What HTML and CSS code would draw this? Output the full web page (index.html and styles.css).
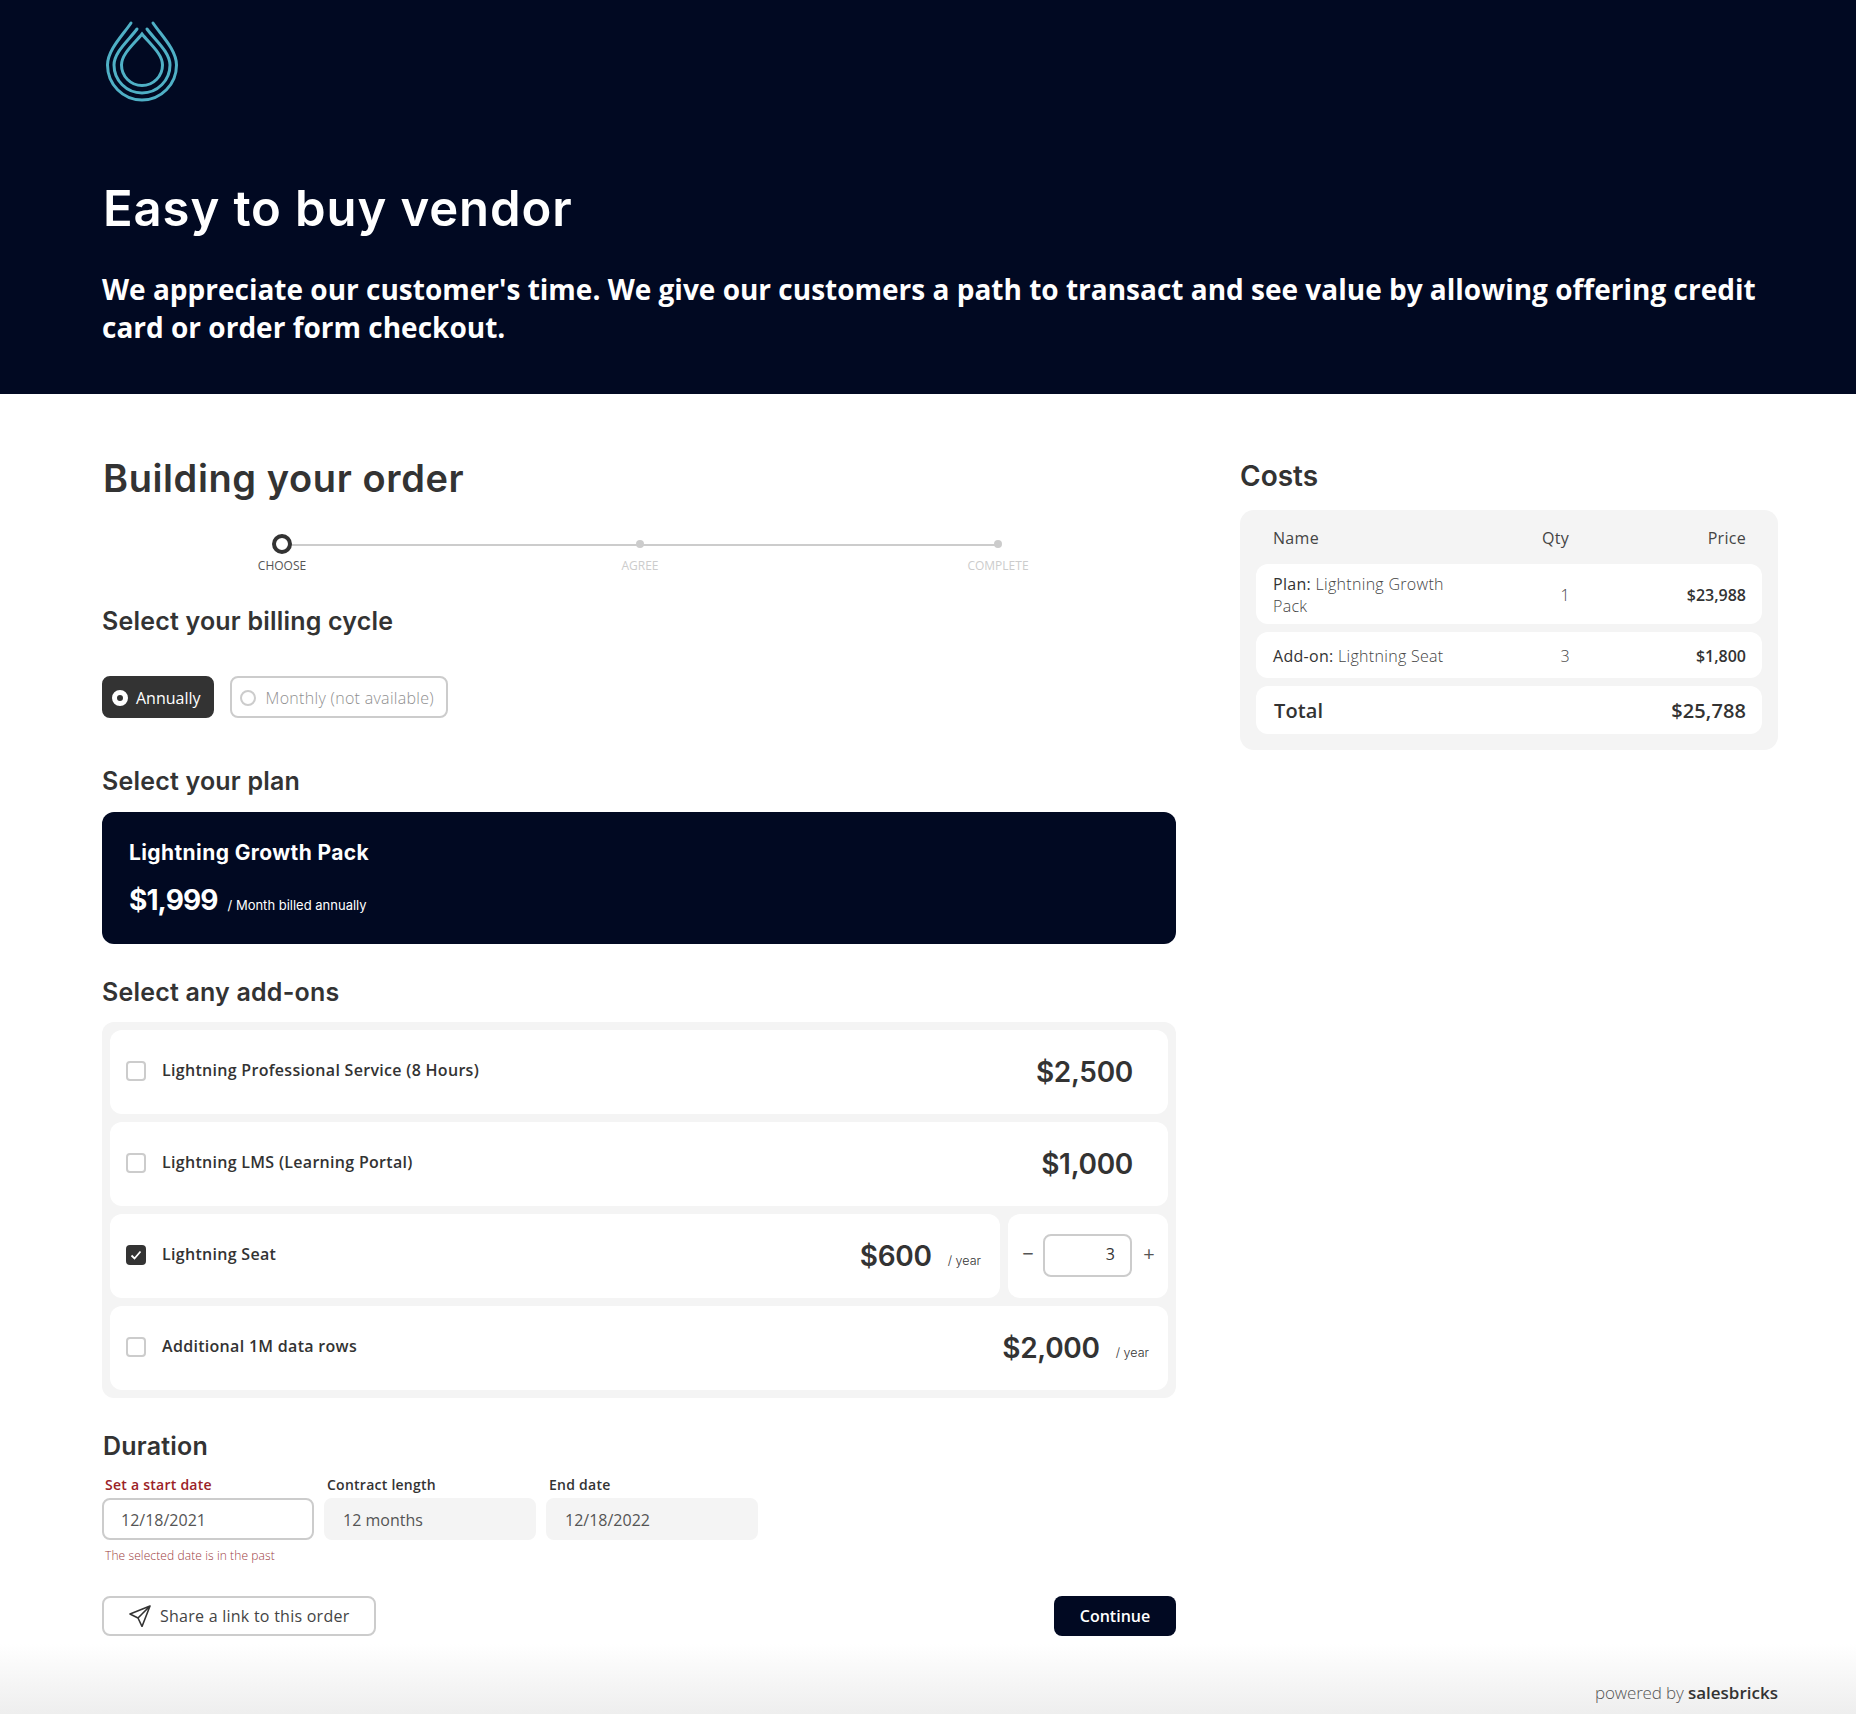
FILE: index.html
```html
<!DOCTYPE html>
<html lang="en">
<head>
  <meta charset="utf-8">
  <title>Easy to buy vendor</title>
  <link rel="stylesheet" href="styles.css">
</head>
<body>
  <header class="hero">
    <svg class="logo" viewBox="0 0 72 82" width="72" height="82" fill="none" stroke="#4fb0c6" stroke-width="3" stroke-linecap="round" aria-hidden="true">
      <path d="M36 14C28 24 15.500 34 15.500 45A20.500 20.500 0 0 0 56.500 45C56.500 34 44 24 36 14Z"/>
      <path d="M31 9C23 20 8 32 8 45A28 28 0 0 0 64 45C64 32 49 20 41 9"/>
      <path d="M25 3C17 15 1.500 30 1.500 45A34.500 35 0 0 0 70.500 45C70.500 30 55 15 47 3"/>
    </svg>
    <h1>Easy to buy vendor</h1>
    <p>We appreciate our customer's time. We give our customers a path to transact and see value by allowing offering credit card or order form checkout.</p>
  </header>

  <main class="page">
    <section class="order">
      <h2 class="order-title">Building your order</h2>

      <div class="stepper">
        <div class="step active"><span class="step-dot"></span><span class="step-label">Choose</span></div>
        <div class="step"><span class="step-dot"></span><span class="step-label">Agree</span></div>
        <div class="step"><span class="step-dot"></span><span class="step-label">Complete</span></div>
      </div>

      <h3 class="section-title billing-title">Select your billing cycle</h3>
      <div class="cycle-options">
        <div class="cycle selected"><span class="radio"></span>Annually</div>
        <div class="cycle disabled"><span class="radio"></span>Monthly (not available)</div>
      </div>

      <h3 class="section-title plan-title">Select your plan</h3>
      <div class="plan">
        <div class="plan-name">Lightning Growth Pack</div>
        <div class="plan-price"><strong>$1,999</strong><span>/ Month billed annually</span></div>
      </div>

      <h3 class="section-title addons-title">Select any add-ons</h3>
      <div class="addons">
        <div class="addon-row">
          <div class="addon">
            <span class="checkbox"></span>
            <span class="addon-name">Lightning Professional Service (8 Hours)</span>
            <span class="addon-price flat">$2,500</span>
          </div>
        </div>
        <div class="addon-row">
          <div class="addon">
            <span class="checkbox"></span>
            <span class="addon-name">Lightning LMS (Learning Portal)</span>
            <span class="addon-price flat">$1,000</span>
          </div>
        </div>
        <div class="addon-row">
          <div class="addon">
            <span class="checkbox checked">
              <svg viewBox="0 0 20 20" width="20" height="20" fill="none" stroke="#fff" stroke-width="1.8"><path d="M5.500 10.500l3 3 6-7"/></svg>
            </span>
            <span class="addon-name">Lightning Seat</span>
            <span class="addon-price">$600</span>
            <span class="per-year">/ year</span>
          </div>
          <div class="qty">
            <span class="qty-btn">−</span>
            <span class="qty-input">3</span>
            <span class="qty-btn">+</span>
          </div>
        </div>
        <div class="addon-row">
          <div class="addon">
            <span class="checkbox"></span>
            <span class="addon-name">Additional 1M data rows</span>
            <span class="addon-price">$2,000</span>
            <span class="per-year">/ year</span>
          </div>
        </div>
      </div>

      <h3 class="section-title duration-title">Duration</h3>
      <div class="dates">
        <div class="date-field error">
          <label>Set a start date</label>
          <div class="date-value">12/18/2021</div>
          <div class="date-error">The selected date is in the past</div>
        </div>
        <div class="date-field">
          <label>Contract length</label>
          <div class="date-value readonly">12 months</div>
        </div>
        <div class="date-field">
          <label>End date</label>
          <div class="date-value readonly">12/18/2022</div>
        </div>
      </div>

      <div class="actions">
        <button class="btn-share">
          <svg viewBox="0 0 22 22" width="22" height="22" fill="none" stroke="#333" stroke-width="1.6" stroke-linejoin="round"><path d="M21 1L1 9l8 4 4 8.500L21 1zM21 1L9 13"/></svg>
          Share a link to this order
        </button>
        <button class="btn-continue">Continue</button>
      </div>
    </section>

    <aside class="costs">
      <h2 class="costs-title">Costs</h2>
      <div class="costs-box">
        <div class="costs-head"><span>Name</span><span class="num">Qty</span><span class="num">Price</span></div>
        <div class="costs-row plan-row"><span><b>Plan:</b> Lightning Growth<br>Pack</span><span class="num">1</span><span class="num price">$23,988</span></div>
        <div class="costs-row addon-cost"><span><b>Add-on:</b> Lightning Seat</span><span class="num">3</span><span class="num price">$1,800</span></div>
        <div class="costs-total"><span>Total</span><span>$25,788</span></div>
      </div>
    </aside>
  </main>

  <footer class="footer">powered by <b>salesbricks</b></footer>
</body>
</html>
```

FILE: styles.css
```css
* {
  box-sizing: border-box;
}

body {
  margin: 0;
  background: #fff;
  color: #333;
  font-family: "Open Sans", sans-serif;
}

.hero {
  height: 394px;
  padding: 20px 78px 0 102px;
  background-color: #010922;
  color: #fff;
}

.logo {
  display: block;
  margin-left: 4px;
}

.hero h1 {
  margin: 78px 0 0 1px;
  font-family: Inter, sans-serif;
  font-size: 49px;
  font-weight: 600;
  line-height: 58px;
  letter-spacing: 0.9px;
}

.hero p {
  margin: 32px 0 0;
  font-size: 28px;
  font-weight: 700;
  line-height: 38px;
}

.page {
  display: flex;
  gap: 64px;
  padding: 0 78px 0 102px;
}

.order {
  width: 1074px;
}

.costs {
  width: 538px;
}

.order-title {
  margin: 61px 0 0 1px;
  font-family: Inter, sans-serif;
  font-size: 38px;
  font-weight: 600;
  line-height: 46px;
  letter-spacing: 0.6px;
}

/* stepper */
.stepper {
  display: grid;
  grid-template-columns: repeat(3, 1fr);
  margin: 33px -1px 0 1px;
}

.step {
  position: relative;
  display: flex;
  flex-direction: column;
  align-items: center;
}

.step:not(:last-child)::after {
  content: "";
  position: absolute;
  top: 10px;
  left: 50%;
  width: 100%;
  height: 2px;
  background: #ccc;
}

.step-dot {
  position: relative;
  z-index: 1;
  width: 8px;
  height: 8px;
  margin: 6px 0;
  border-radius: 50%;
  background: #ccc;
}

.step.active .step-dot {
  width: 20px;
  height: 20px;
  margin: 0;
  border: 4px solid #333;
  background: #fff;
}

.step-label {
  margin-top: 3px;
  color: #ccc;
  font-size: 12px;
  line-height: 17px;
  text-transform: uppercase;
}

.step.active .step-label {
  color: #555;
}

/* section headings */
.section-title {
  margin: 32px 0 0;
  font-family: Inter, sans-serif;
  font-size: 25px;
  font-weight: 600;
  line-height: 30px;
  letter-spacing: 0.2px;
}

.plan-title {
  margin-top: 48px;
}

.duration-title {
  margin-top: 33px;
  margin-left: 1px;
}

.addons-title {
  margin-top: 33px;
}

/* billing cycle */
.cycle-options {
  display: flex;
  gap: 16px;
  margin-top: 40px;
}

.cycle {
  display: flex;
  align-items: center;
  gap: 8px;
  height: 42px;
  padding: 1px 11px 0 8px;
  border: 2px solid #ccc;
  border-radius: 8px;
  font-size: 16px;
}

.cycle.selected {
  border-color: #333;
  background: #333;
  color: #fff;
}

.cycle.disabled {
  gap: 10px;
  padding-right: 12px;
  color: #8f8f8f;
  font-weight: 300;
  letter-spacing: 0.3px;
}

.radio {
  width: 16px;
  height: 16px;
  border: 2px solid #ccc;
  border-radius: 50%;
}

.cycle.selected .radio {
  border: 5px solid #fff;
  background: #333;
}

/* plan card */
.plan {
  height: 132px;
  margin-top: 16px;
  padding: 26px 27px;
  border-radius: 12px;
  background: #010922;
  color: #fff;
}

.plan-name {
  font-family: Inter, sans-serif;
  font-size: 21px;
  font-weight: 700;
  line-height: 30px;
  letter-spacing: 0.4px;
}

.plan-price {
  display: flex;
  align-items: baseline;
  gap: 10px;
  margin-top: 14px;
}

.plan-price strong {
  font-family: Inter, sans-serif;
  font-size: 28px;
  font-weight: 700;
  line-height: 36px;
  letter-spacing: -0.9px;
}

.plan-price span {
  font-family: Inter, sans-serif;
  font-size: 13px;
}

/* add-ons */
.addons {
  display: flex;
  flex-direction: column;
  gap: 8px;
  margin-top: 15px;
  padding: 8px;
  border-radius: 12px;
  background: #f4f4f4;
}

.addon-row {
  display: flex;
  gap: 8px;
  height: 84px;
}

.addon {
  display: flex;
  flex: 1;
  align-items: center;
  padding: 0 19px 0 16px;
  border-radius: 12px;
  background: #fff;
}

.checkbox {
  width: 20px;
  height: 20px;
  margin: 0 16px 2px 0;
  border: 2px solid #ccc;
  border-radius: 4px;
  overflow: hidden;
}

.checkbox.checked {
  border: 0;
  background: #333;
}

.checkbox svg {
  display: block;
}

.addon-name {
  flex: 1;
  margin-bottom: 5px;
  font-size: 16px;
  font-weight: 600;
  letter-spacing: 0.3px;
}

.addon-price {
  font-family: Inter, sans-serif;
  font-size: 28px;
  font-weight: 600;
  letter-spacing: -0.3px;
}

.addon-price.flat {
  margin-right: 16px;
}

.per-year {
  flex-shrink: 0;
  margin: 9px 0 0 16px;
  font-family: Inter, sans-serif;
  font-size: 12.5px;
  font-weight: 300;
  white-space: nowrap;
}

.qty {
  display: flex;
  align-items: center;
  justify-content: space-between;
  width: 160px;
  padding: 0 12px 2px 13px;
  border-radius: 12px;
  background: #fff;
}

.qty-btn {
  width: 14px;
  margin: 0 0 2px;
  color: #555;
  font-size: 20px;
  line-height: 24px;
  text-align: center;
}

.qty-input {
  width: 89px;
  height: 43px;
  margin-right: 2px;
  padding-right: 15px;
  border: 2px solid #ccc;
  border-radius: 8px;
  font-size: 16px;
  line-height: 37px;
  text-align: right;
}

/* duration */
.dates {
  display: flex;
  gap: 10px;
  margin-top: 15px;
}

.date-field {
  width: 212px;
}

.date-field label {
  display: block;
  margin-left: 3px;
  font-size: 14px;
  font-weight: 600;
  line-height: 18px;
  letter-spacing: 0.25px;
}

.date-value {
  height: 42px;
  margin-top: 4px;
  padding-left: 17px;
  border: 2px solid #ccc;
  border-radius: 8px;
  color: #555;
  font-size: 16px;
  line-height: 40px;
}

.date-value.readonly {
  border-color: #f4f4f4;
  background: #f4f4f4;
}

.date-field.error label {
  color: #9b2226;
}

.date-error {
  margin: 8px 0 0 3px;
  color: #9b3a3d;
  font-size: 12px;
  font-weight: 300;
  line-height: 16px;
  letter-spacing: 0.1px;
}

/* actions */
.actions {
  display: flex;
  justify-content: space-between;
  margin-top: 32px;
}

.btn-share {
  display: flex;
  align-items: center;
  gap: 9px;
  width: 274px;
  height: 40px;
  padding: 0 0 0 25px;
  border: 2px solid #ccc;
  border-radius: 8px;
  background: #fff;
  color: #444;
  font-family: inherit;
  font-size: 16px;
  letter-spacing: 0.25px;
}

.btn-continue {
  width: 122px;
  height: 40px;
  border: 0;
  border-radius: 8px;
  background: #010922;
  color: #fff;
  font-family: inherit;
  font-size: 16px;
  font-weight: 600;
}

/* costs */
.costs-title {
  margin: 64px 0 0;
  font-family: Inter, sans-serif;
  font-size: 28px;
  font-weight: 600;
  line-height: 36px;
}

.costs-box {
  margin-top: 16px;
  padding: 10px 16px 16px;
  border-radius: 14px;
  background: #f4f4f4;
}

.costs-head,
.costs-row {
  display: grid;
  grid-template-columns: 200px 97px 1fr;
  align-items: center;
  padding: 0 16px 0 17px;
}

.costs-head {
  grid-template-columns: 200px 96px 1fr;
  height: 36px;
  margin-bottom: 8px;
  color: #444;
  font-size: 16px;
  letter-spacing: 0.3px;
}

.costs-row {
  margin-bottom: 8px;
  padding-top: 2px;
  border-radius: 12px;
  background: #fff;
  color: #444;
  font-size: 16px;
  font-weight: 300;
  line-height: 22px;
  letter-spacing: 0.3px;
}

.plan-row {
  height: 60px;
}

.addon-cost {
  height: 46px;
}

.costs-row b {
  color: #333;
  font-weight: 500;
}

.num {
  text-align: right;
}

.price {
  color: #333;
  font-weight: 600;
  letter-spacing: 0;
}

.costs-total {
  display: flex;
  justify-content: space-between;
  align-items: center;
  height: 48px;
  padding: 0 16px 0 18px;
  border-radius: 12px;
  background: #fff;
  font-size: 20px;
  font-weight: 600;
  letter-spacing: 0.1px;
}

/* footer */
.footer {
  height: 78px;
  padding: 45px 78px 0 0;
  background: linear-gradient(#fff 10%, #eee);
  color: #555;
  font-size: 17px;
  font-weight: 300;
  line-height: 24px;
  letter-spacing: -0.15px;
  text-align: right;
}

.footer b {
  color: #333;
  font-weight: 600;
  letter-spacing: 0;
}
```
